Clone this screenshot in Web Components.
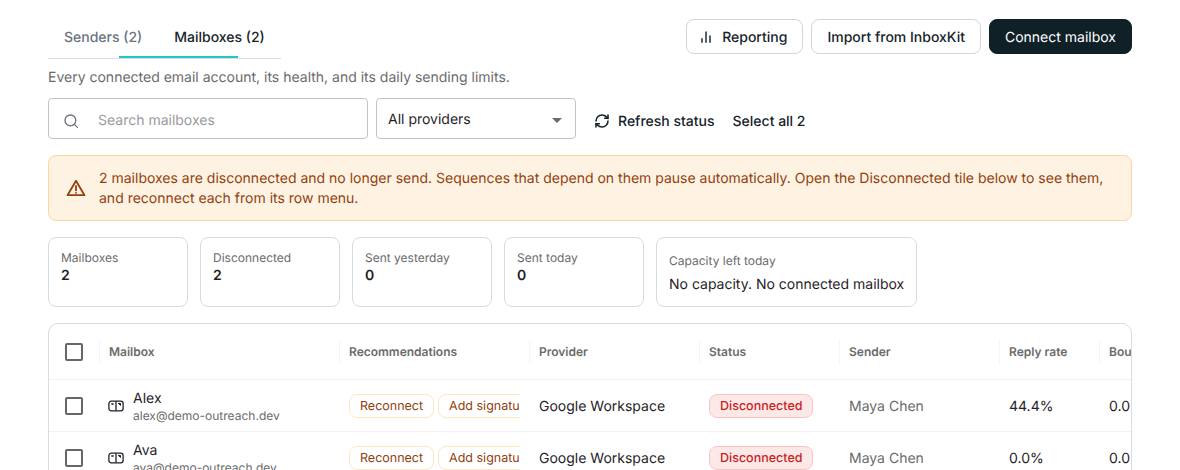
<!doctype html>
<html><head><meta charset="utf-8">
<style>
html,body{margin:0;height:470px;overflow:hidden;background:#fff}
body{font-family:Inter,"Liberation Sans",sans-serif;color:#1f2328;font-size:14px;text-rendering:geometricPrecision}
</style></head><body>
<mb-page>
  <mb-header></mb-header>
  <mb-subtitle>Every connected email account, its health, and its daily sending limits.</mb-subtitle>
  <mb-toolbar></mb-toolbar>
  <mb-alert>2 mailboxes are disconnected and no longer send. Sequences that depend on them pause automatically. Open the Disconnected tile below to see them, and reconnect each from its row menu.</mb-alert>
  <mb-tiles>
    <mb-tile label="Mailboxes" value="2"></mb-tile>
    <mb-tile label="Disconnected" value="2"></mb-tile>
    <mb-tile label="Sent yesterday" value="0"></mb-tile>
    <mb-tile label="Sent today" value="0"></mb-tile>
    <mb-tile wide label="Capacity left today" value="No capacity. No connected mailbox"></mb-tile>
  </mb-tiles>
  <mb-table>
    <mb-head></mb-head>
    <mb-row name="Alex" email="alex@demo-outreach.dev" reply="44.4%" bounce="0.0%"></mb-row>
    <mb-row name="Ava" email="ava@demo-outreach.dev" reply="0.0%" bounce="0.0%"></mb-row>
  </mb-table>
</mb-page>
<script>
const ICON={
 bars:'<svg width="14" height="14" viewBox="0 0 14 14" fill="none" stroke="#2a3a42" stroke-width="1.6"><path d="M3 8.2v4.6M7 1.5v11.3M11 5.5v7.3"/></svg>',
 search:'<svg width="16" height="16" viewBox="0 0 16 16" fill="none" stroke="#6b7176" stroke-width="1.3" stroke-linecap="round"><circle cx="7.4" cy="7.4" r="5.4"/><path d="M11.4 11.4l3 3"/></svg>',
 refresh:'<svg width="16" height="16" viewBox="0 0 24 24" fill="none" stroke="#15232a" stroke-width="2.3" stroke-linecap="round" stroke-linejoin="round"><path d="M3 12a9 9 0 0 1 9-9 9.75 9.75 0 0 1 6.74 2.74L21 8"/><path d="M21 3v5h-5"/><path d="M21 12a9 9 0 0 1-9 9 9.75 9.75 0 0 1-6.74-2.74L3 16"/><path d="M8 16H3v5"/></svg>',
 warn:'<svg width="20" height="20" viewBox="0 0 20 20" fill="none" stroke="#92400e" stroke-width="1.8" stroke-linecap="round" stroke-linejoin="round"><path d="M10 2.8 1.5 17.2h17z"/><path d="M10 8v4.4"/><path d="M10 14.8v.1"/></svg>',
 mail:'<svg width="16" height="16" viewBox="0 0 16 16" fill="none" stroke="#1f2328" stroke-width="1.3" stroke-linejoin="round"><rect x=".9" y="3.2" width="14.2" height="9.6" rx="2.4"/><path d="M8 3.2v9.6"/><path d="M3.8 6h1.4" stroke-linecap="round"/><path d="M10.3 5.4h2.2v2z" fill="#1f2328" stroke-width="1"/></svg>'
};
function def(name,css,html){
  customElements.define(name,class extends HTMLElement{
    connectedCallback(){
      if(this.shadowRoot)return;
      const s=this.attachShadow({mode:'open'});
      const a=n=>this.getAttribute(n)||'';
      s.innerHTML='<style>'+css+'</style>'+(typeof html==='function'?html(a,this):html);
    }
  });
}
def('mb-page',':host{display:flex;flex-direction:column;padding:19px 48px 0;width:1084px}','<slot></slot>');
def('mb-button',`:host{display:inline-flex;align-items:center;gap:9px;height:35px;box-sizing:border-box;padding:0 15px;border:1px solid #d3d5da;border-radius:8px;background:#fff;color:#15232a;font-size:14px;font-weight:500;white-space:nowrap}
:host([icon]){padding-left:12px}
:host([primary]){background:#0f2027;border-color:#0f2027;color:#fff;font-weight:400}
svg{display:block}.t{padding-top:2px}`,(a)=>(a('icon')?ICON[a('icon')]:'')+'<span class="t"><slot></slot></span>');
def('mb-header',`:host{display:flex;justify-content:space-between;align-items:flex-start}
.tabs{position:relative;display:flex;width:233px;height:40px;box-sizing:border-box;border-bottom:1px solid #dcdee3;font-size:14px;font-weight:500;padding-left:16px;gap:32px;line-height:38px}
.off{color:#6b7280}.on{color:#15232a}
.ind{position:absolute;left:71px;bottom:0;width:119px;height:2px;background:#22c7c4}
.acts{display:flex;gap:8px}`,
`<div class="tabs"><span class="off">Senders (2)</span><span class="on">Mailboxes (2)</span><i class="ind"></i></div>
<div class="acts"><mb-button icon="bars">Reporting</mb-button><mb-button>Import from InboxKit</mb-button><mb-button primary>Connect mailbox</mb-button></div>`);
def('mb-subtitle',':host{display:block;margin-top:10px;font-size:14px;line-height:18px;color:#6b6b6b}','<slot></slot>');
def('mb-toolbar',`:host{display:flex;align-items:center;gap:8px;margin-top:11px}
.search{display:flex;align-items:center;width:320px;height:41px;box-sizing:border-box;border:1px solid #c4c4c8;border-radius:4px;padding:4px 0 0 14px;gap:19px;color:#9a9a9e;font-size:14px}
.sel{display:flex;align-items:center;justify-content:space-between;width:200px;height:41px;box-sizing:border-box;border:1px solid #c4c4c8;border-radius:4px;padding:0 13px 0 11px;color:#1f2328;font-size:14px}
.sel span{padding-top:2px}
.caret{width:0;height:0;border:5px solid transparent;border-top-color:#6b6b6b;border-bottom:0;margin-top:4px}
.act{display:flex;align-items:center;gap:8px;margin:5px 0 0 10px;font-weight:500;color:#15232a;white-space:nowrap}
svg{display:block}`,
()=>`<div class="search">${ICON.search}<span>Search mailboxes</span></div><div class="sel"><span>All providers</span><i class="caret"></i></div><div class="act">${ICON.refresh}<span>Refresh status</span></div><div class="act">Select all 2</div>`);
def('mb-alert',`:host{display:flex;align-items:center;gap:13px;margin-top:16px;height:66px;box-sizing:border-box;padding:0 17px;background:#fef3e2;border:1px solid #fbd89f;border-radius:8px;color:#92400e;font-size:14px;line-height:20px}
svg{flex:none;display:block}.t{padding-top:2px}`,()=>ICON.warn+'<div class="t"><slot></slot></div>');
def('mb-tiles',':host{display:flex;gap:12px;margin-top:16px}','<slot></slot>');
def('mb-tile',`:host{display:block;box-sizing:border-box;width:140px;height:70px;padding:12px;border:1px solid #d9dbe0;border-radius:8px}
:host([wide]){width:261px;padding-top:15px}
.l{font-size:12px;line-height:16px;color:#6b6b6b}
.v{font-size:14px;font-weight:600;line-height:18px;color:#1f2328;margin-top:1px}
:host([wide]) .v{font-weight:400;margin-top:7px;white-space:nowrap}`,a=>`<div class="l">${a('label')}</div><div class="v">${a('value')}</div>`);
def('mb-table',':host{display:block;margin-top:16px;height:200px;box-sizing:border-box;border:1px solid #d9dbe0;border-radius:10px;overflow:hidden;background:#fff}','<slot></slot>');
const GRID='display:grid;grid-template-columns:50px 240px 190px 170px 140px 160px 100px 100px;width:1150px;';
const BOX='.cb{width:18px;height:18px;box-sizing:border-box;border:2px solid #666;border-radius:2px;margin-left:16px}';
def('mb-head',`:host{${GRID}height:55px;align-items:center;border-bottom:1px solid #f1f1f3;font-size:12px;font-weight:600;color:#6b6b6b}
${BOX}.c{height:24px;display:flex;align-items:center;padding-left:9px;border-left:1px solid #f5f5f7;white-space:nowrap}.w{display:flex;align-items:center}`,
`<div class="w"><div class="cb"></div></div>`+['Mailbox','Recommendations','Provider','Status','Sender','Reply rate','Bounce rate'].map(t=>`<div class="c">${t}</div>`).join(''));
def('mb-row',`:host{${GRID}height:51px;align-items:center;border-bottom:1px solid #f1f1f3;font-size:14px;color:#1f2328}
${BOX}.w{display:flex;align-items:center}
.mb{display:flex;align-items:center;gap:9px;padding-left:9px}
.mb svg{display:block;flex:none}
.who{padding-top:2px}
.n{font-size:14px;line-height:17px;font-weight:400}.e{font-size:12px;line-height:17px;color:#6b6b6b;white-space:nowrap}
.rec{display:flex;gap:4px;margin-left:10px;width:171px;overflow:hidden}
.chip{flex:none;height:24px;box-sizing:border-box;padding:0 10px;border:1px solid #fde6c0;border-radius:8px;font-size:12.5px;font-weight:400;line-height:24px;color:#92400e;background:#fff;white-space:nowrap}
.p{padding:2px 0 0 10px;white-space:nowrap}
.st{display:inline-block;margin-left:10px;height:24px;box-sizing:border-box;padding:0 10px;border:1px solid #fbc4c4;background:#fde8e8;border-radius:8px;color:#c81e1e;font-size:12.5px;font-weight:500;line-height:24px;white-space:nowrap;justify-self:start}
.mut{color:#6b6b6b}`,
a=>`<div class="w"><div class="cb"></div></div>
<div class="mb">${ICON.mail}<div class="who"><div class="n">${a('name')}</div><div class="e">${a('email')}</div></div></div>
<div><div class="rec"><span class="chip">Reconnect</span><span class="chip">Add signature</span></div></div>
<div class="p">Google Workspace</div>
<div class="st">Disconnected</div>
<div class="p mut">Maya Chen</div>
<div class="p">${a('reply')}</div>
<div class="p">${a('bounce')}</div>`);
</script>
</body></html>
